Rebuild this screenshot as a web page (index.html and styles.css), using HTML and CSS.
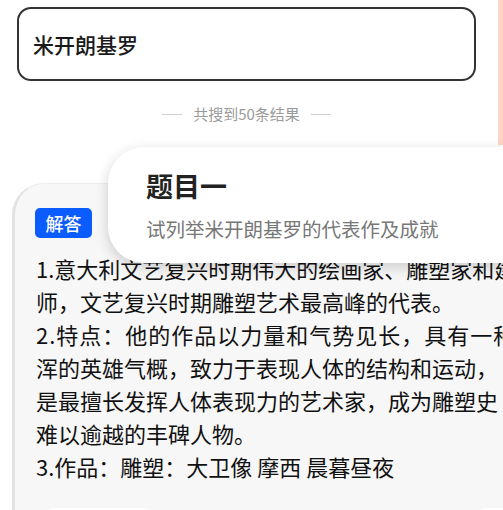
FILE: index.html
```html
<!DOCTYPE html>
<html lang="zh-CN">
<head>
  <meta charset="UTF-8" />
  <meta name="viewport" content="width=device-width, initial-scale=1.0" />
  <title>搜索结果</title>
  <link rel="stylesheet" href="styles.css">
</head>
<body>
  <div class="side-strip"></div>

  <div class="top">
    <div class="search-box">米开朗基罗</div>
    <div class="count"><span class="dash"></span>共搜到50条结果<span class="dash"></span></div>
  </div>

  <div class="card">
    <span class="tag">解答</span>
    <p class="answer">1.意大利文艺复兴时期伟大的绘画家、雕塑家和建<br>师，文艺复兴时期雕塑艺术最高峰的代表。<br><span class="wide">2.特点：他的作品以力量和气势见长，具有一种</span><br>浑的英雄气概，致力于表现人体的结构和运动，<br>是最擅长发挥人体表现力的艺术家，成为雕塑史<br>难以逾越的丰碑人物。<br>3.作品：雕塑：大卫像 摩西 晨暮昼夜</p>
    <div class="actions">
      <span class="pill"></span>
      <span class="pill pill-right"></span>
    </div>
  </div>

  <div class="popup">
    <h2>题目一</h2>
    <p>试列举米开朗基罗的代表作及成就</p>
  </div>
</body>
</html>
```

FILE: styles.css
```css
* {
  margin: 0;
  padding: 0;
  box-sizing: border-box;
}
body {
  font-family: "Noto Sans CJK SC", "Noto Sans", sans-serif;
  background-color: #fff;
  color: #222;
  width: 503px;
  height: 510px;
  overflow: hidden;
  position: relative;
}
.side-strip {
  position: absolute;
  top: 0;
  right: 0;
  width: 5px;
  height: 145px;
  background: #ffd6c5;
}
.top {
  width: 459px;
  margin-left: 17px;
  padding-top: 7px;
}
.search-box {
  height: 74px;
  border: 2px solid #333;
  border-radius: 14px;
  display: flex;
  align-items: center;
  padding-left: 14px;
  font-size: 21px;
  font-weight: 500;
  color: #1a1a1a;
}
.count {
  display: flex;
  align-items: center;
  justify-content: center;
  gap: 11px;
  margin-top: 22px;
  font-size: 15px;
  color: #9a9a9a;
  line-height: 22px;
}
.dash {
  width: 20px;
  height: 1px;
  background: #d0d0d0;
}
.card {
  margin-top: 58px;
  margin-left: 12px;
  width: 540px;
  background: #f7f7f7;
  border-left: 3px solid #e2e2e2;
  border-top: 1px solid #ededed;
  border-radius: 32px 32px 0 0;
  padding: 24px 0 0 20px;
}
.tag {
  display: inline-block;
  width: 57px;
  height: 30px;
  line-height: 30px;
  text-align: center;
  background: #0b5cff;
  color: #fff;
  font-size: 18px;
  font-weight: 500;
  border-radius: 5px;
}
.answer {
  margin-top: 14px;
  padding-left: 1px;
  font-size: 22px;
  line-height: 33px;
  color: #111;
  white-space: nowrap;
}
.wide {
  letter-spacing: 1px;
}
.actions {
  display: flex;
  justify-content: space-between;
  margin-top: 25px;
  padding-left: 5px;
}
.pill {
  width: 117px;
  height: 30px;
  background: #fff;
  border-radius: 15px;
}
.pill-right {
  width: 80px;
}
.popup {
  position: absolute;
  top: 147px;
  left: 108px;
  width: 430px;
  height: 116px;
  background: #fff;
  border-radius: 36px;
  box-shadow: 0 4px 14px rgba(0, 0, 0, 0.18);
  padding: 22px 0 0 38px;
}
.popup h2 {
  font-size: 27px;
  font-weight: 700;
  color: #222;
  line-height: 34px;
}
.popup p {
  margin-top: 12px;
  font-size: 19.5px;
  color: #777;
  line-height: 28px;
}
```
